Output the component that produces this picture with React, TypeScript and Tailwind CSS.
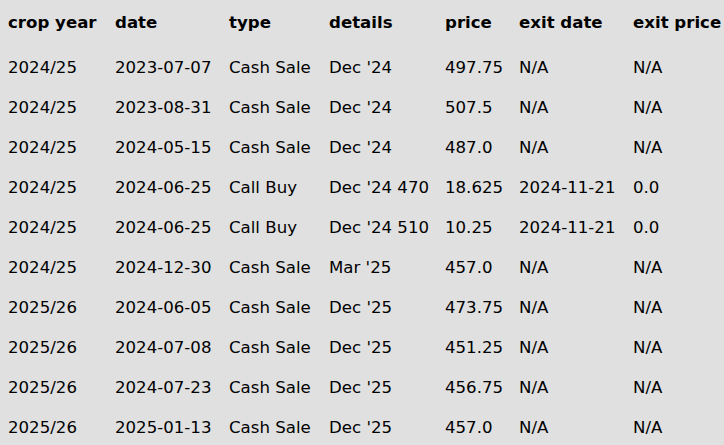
const columns = ["crop year", "date", "type", "details", "price", "exit date", "exit price"];

const rows: string[][] = [
  ["2024/25", "2023-07-07", "Cash Sale", "Dec '24", "497.75", "N/A", "N/A"],
  ["2024/25", "2023-08-31", "Cash Sale", "Dec '24", "507.5", "N/A", "N/A"],
  ["2024/25", "2024-05-15", "Cash Sale", "Dec '24", "487.0", "N/A", "N/A"],
  ["2024/25", "2024-06-25", "Call Buy", "Dec '24 470", "18.625", "2024-11-21", "0.0"],
  ["2024/25", "2024-06-25", "Call Buy", "Dec '24 510", "10.25", "2024-11-21", "0.0"],
  ["2024/25", "2024-12-30", "Cash Sale", "Mar '25", "457.0", "N/A", "N/A"],
  ["2025/26", "2024-06-05", "Cash Sale", "Dec '25", "473.75", "N/A", "N/A"],
  ["2025/26", "2024-07-08", "Cash Sale", "Dec '25", "451.25", "N/A", "N/A"],
  ["2025/26", "2024-07-23", "Cash Sale", "Dec '25", "456.75", "N/A", "N/A"],
  ["2025/26", "2025-01-13", "Cash Sale", "Dec '25", "457.0", "N/A", "N/A"],
];

const gridCols = "grid grid-cols-[107px_114px_100px_116px_74px_114px_1fr] pl-[8px]";

export default function App() {
  return (
    <div className="w-[724px] h-[445px] overflow-hidden bg-[#e0e0e0] text-black font-['DejaVu_Sans',sans-serif] text-[16.6px] leading-[19px]">
      {/* header */}
      <div className={`${gridCols} h-[47px] pt-[13px] font-bold`}>
        {columns.map((c) => (
          <div key={c} className="whitespace-nowrap">{c}</div>
        ))}
      </div>

      {/* data rows */}
      {rows.map((r, i) => (
        <div key={i} className={`${gridCols} h-[40px] items-center`}>
          {r.map((v, j) => (
            <div key={j} className="whitespace-nowrap">{v}</div>
          ))}
        </div>
      ))}
    </div>
  );
}
